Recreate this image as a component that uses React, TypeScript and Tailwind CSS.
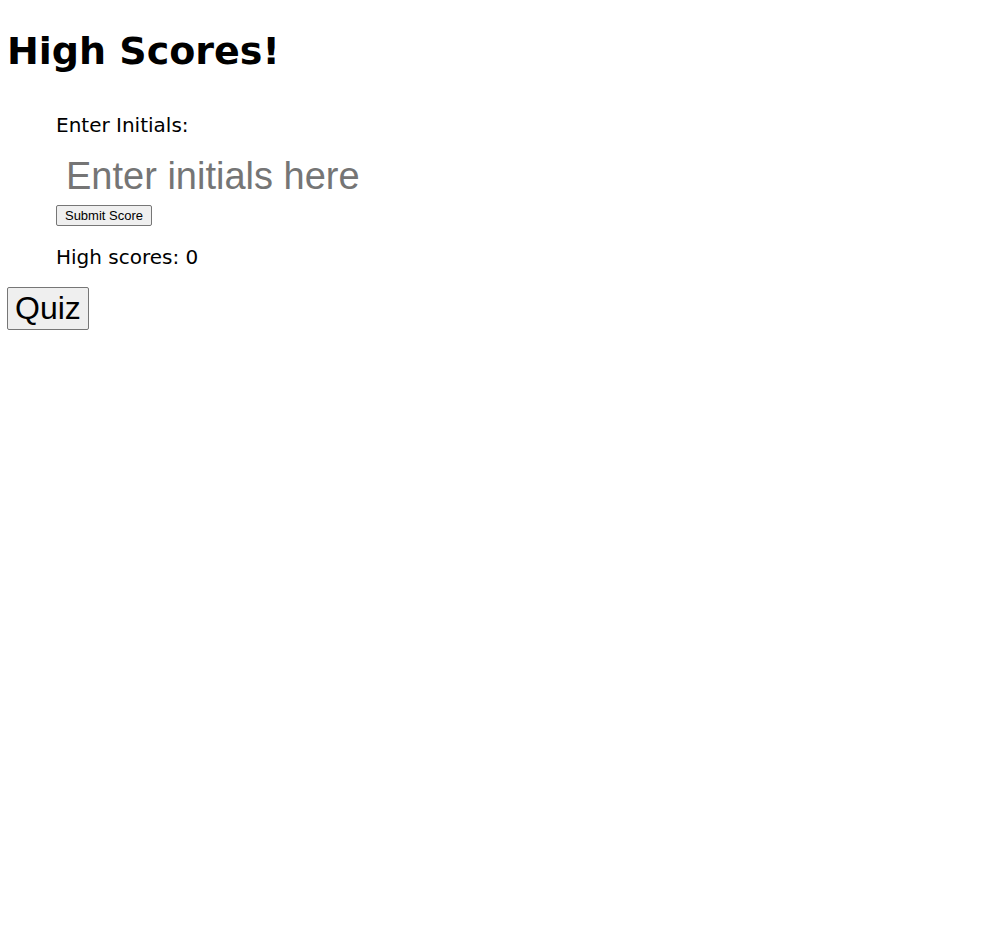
import React from "react";

export default function App() {
  return (
    <main className="min-h-screen bg-white px-2 pt-7 font-['Verdana','DejaVu_Sans',sans-serif] text-black">
      <h1 className="-ml-px text-[38px] leading-[46px] font-bold">High Scores!</h1>
      <form className="mt-10 ml-12 flex flex-col items-start text-[20px] leading-[22px]" onSubmit={(e) => e.preventDefault()}>
        <label htmlFor="initials">Enter Initials:</label>
        <input
          id="initials"
          type="text"
          placeholder="Enter initials here"
          className="mt-4 h-12 w-full max-w-lg px-2.5 font-['Liberation_Sans',Arial,sans-serif] text-[38px] leading-[44px] outline-none placeholder:text-[#757575]"
        />
        <button
          type="submit"
          className="mt-[5px] w-24 rounded-[2px] border border-[#767676] bg-[#efefef] py-px text-center font-['Liberation_Sans',Arial,sans-serif] text-[13px] leading-[17px]"
        >
          Submit Score
        </button>
        <p className="mt-5">High scores: 0</p>
      </form>
      <button
        type="button"
        className="-ml-px mt-[19px] rounded-[2px] border border-[#767676] bg-[#efefef] px-[7px] font-['Liberation_Sans',Arial,sans-serif] text-[32px] leading-[41px]"
      >
        Quiz
      </button>
    </main>
  );
}
